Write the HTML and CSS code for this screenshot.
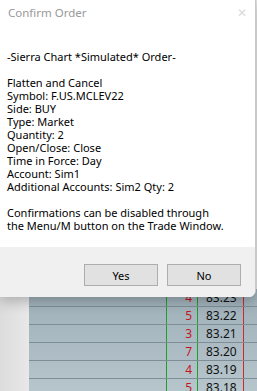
FILE: index.html
```html
<!DOCTYPE html>
<html lang="en">
<head>
    <meta charset="UTF-8">
    <meta name="viewport" content="width=device-width, initial-scale=1.0">
    <title>Confirm Order</title>
    <link rel="stylesheet" href="styles.css">
</head>
<body>
    <!-- Confirmation dialog -->
    <div class="dialog">
        <div class="title-bar">
            <span class="title">Confirm Order</span>
            <span class="close">&#x2715;</span>
        </div>
        <div class="message">
            <p>-Sierra Chart *Simulated* Order-</p>
            <p>Flatten and Cancel<br>
               Symbol: F.US.MCLEV22<br>
               Side: BUY<br>
               Type: Market<br>
               Quantity: 2<br>
               Open/Close: Close<br>
               Time in Force: Day<br>
               Account: Sim1<br>
               Additional Accounts: Sim2 Qty: 2</p>
            <p>Confirmations can be disabled through<br>
               the Menu/M button on the Trade Window.</p>
        </div>
        <div class="footer">
            <button class="btn">Yes</button>
            <button class="btn">No</button>
        </div>
    </div>

    <!-- Trade DOM behind the dialog -->
    <div class="backdrop">
        <div class="side"></div>
        <div class="ladder" id="ladder"></div>
    </div>

    <script>
        const rows = [
            { qty: 4, price: "83.23" },
            { qty: 5, price: "83.22" },
            { qty: 3, price: "83.21" },
            { qty: 7, price: "83.20" },
            { qty: 4, price: "83.19" },
            { qty: 5, price: "83.18" }
        ];

        document.getElementById("ladder").innerHTML = rows.map(row =>
            `<div class="row">
                <div class="cell empty"></div>
                <div class="cell qty">${row.qty}</div>
                <div class="cell price">${row.price}</div>
                <div class="cell rest"></div>
            </div>`).join("");
    </script>
</body>
</html>
```

FILE: styles.css
```css
/* Reset some default styles */
* {
    margin: 0;
    padding: 0;
    box-sizing: border-box;
}

body {
    font-family: "Noto Sans", sans-serif;
    background-color: #e4e4e4;
    color: #000;
    width: 257px;
    height: 391px;
    overflow: hidden;
}

.dialog {
    position: relative;
    z-index: 1;
    width: 256px;
    background-color: #fff;
    border-right: 1px solid #c8c8c8;
    border-bottom-right-radius: 7px;
    box-shadow: 0 4px 14px rgba(0, 0, 0, 0.25);
    overflow: hidden;
}

.title-bar {
    height: 25px;
    display: flex;
    align-items: center;
    justify-content: space-between;
    padding: 0 8px 0 8px;
}

.title {
    font-size: 11.5px;
    color: #999;
}

.close {
    font-size: 12px;
    color: #dadada;
}

.message {
    padding: 25px 7px 15px;
    font-size: 11px;
    line-height: 13px;
}

.message p {
    margin-bottom: 13px;
}

.message p:last-child {
    margin-bottom: 0;
}

.footer {
    height: 50px;
    background-color: #f0f0f0;
    display: flex;
    justify-content: flex-end;
    gap: 9px;
    padding: 17px 14px 0 0;
}

.btn {
    width: 74px;
    height: 22px;
    font-family: "Noto Sans", sans-serif;
    font-size: 11px;
    background-color: #e1e1e1;
    border: 1px solid #adadad;
    color: #000;
}

.backdrop {
    display: flex;
    margin-top: -8px;
    height: 102px;
}

.side {
    width: 29px;
    background: linear-gradient(to right, #dcdcdc, #e8e8e8);
}

.ladder {
    flex: 1;
    background: linear-gradient(to bottom, #9eafb8, #b7c5cc);
}

.row {
    display: flex;
    height: 18px;
    border-bottom: 1px solid #7f8e96;
}

.cell {
    font-size: 12px;
    line-height: 17px;
}

.empty {
    width: 138px;
    border-right: 1px solid #1fa02a;
}

.qty {
    width: 31px;
    text-align: right;
    padding-right: 5px;
    color: #c4161c;
    border-right: 1px solid #1fa02a;
}

.price {
    width: 46px;
    padding-left: 8px;
    color: #111;
    border-right: 1px solid #d02828;
}

.rest {
    flex: 1;
}
```
